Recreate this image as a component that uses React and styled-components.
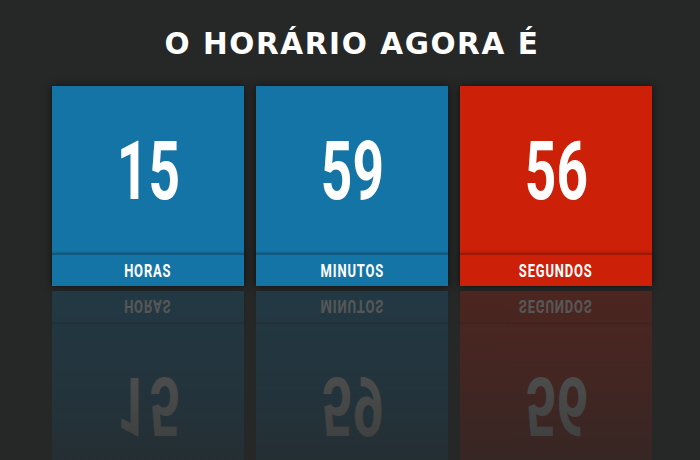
import React from "react";
import styled, { createGlobalStyle } from "styled-components";

const Global = createGlobalStyle`
  html, body {
    margin: 0;
    padding: 0;
    background: #262727;
    overflow: hidden;
  }
`;

const Page = styled.div`
  width: 700px;
  height: 460px;
  padding: 24px 0 0 4px;
  box-sizing: border-box;
  display: flex;
  flex-direction: column;
  align-items: center;
`;

const Title = styled.h1`
  margin: 0 0 22px;
  font-family: "DejaVu Sans", "Open Sans", sans-serif;
  font-weight: 700;
  font-size: 29.5px;
  line-height: 40px;
  color: #ffffff;
  letter-spacing: 1.6px;
`;

const Row = styled.div`
  display: flex;
  gap: 12px;
`;

const Column = styled.div`
  display: flex;
  flex-direction: column;
  gap: 5px;
  width: 192px;
`;

const Face = styled.div`
  height: 200px;
  display: flex;
  flex-direction: column;
  background: ${(p) => p.$color};
  box-shadow: ${(p) => (p.$flat ? "none" : "0 0 8px rgba(0, 0, 0, 0.55)")};
`;

const NumberArea = styled.div`
  flex: 1;
  display: flex;
  align-items: center;
  justify-content: center;
`;

const Digits = styled.span`
  display: inline-block;
  font-family: Roboto, "Liberation Sans", sans-serif;
  font-weight: 700;
  font-size: 81px;
  line-height: 1;
  color: #ffffff;
  transform: scaleX(0.68);
  padding-top: 3px;
`;

const Label = styled.div`
  height: 31px;
  display: flex;
  align-items: center;
  justify-content: center;
  border-top: 2px solid rgba(0, 0, 0, 0.22);
  box-shadow: 0 -1px 2px rgba(0, 0, 0, 0.15);
`;

const LabelText = styled.span`
  display: inline-block;
  font-family: Roboto, "Liberation Sans", sans-serif;
  font-weight: 700;
  font-size: 18.5px;
  letter-spacing: 1.2px;
  color: #ffffff;
  transform: scaleX(0.7);
`;

const Reflection = styled.div`
  position: relative;
  height: 200px;
  &::after {
    content: "";
    position: absolute;
    inset: 0;
    background: linear-gradient(
      to bottom,
      rgba(38, 39, 39, 0.77) 0%,
      rgba(38, 39, 39, 0.84) 50%,
      rgba(38, 39, 39, 0.93) 100%
    );
  }
`;

const Flipped = styled.div`
  transform: scaleY(-1);
`;

const units = [
  { value: "15", label: "HORAS", color: "#1574a6" },
  { value: "59", label: "MINUTOS", color: "#1574a6" },
  { value: "56", label: "SEGUNDOS", color: "#cc2008" },
];

function Card({ value, label, color, flat }) {
  return (
    <Face $color={color} $flat={flat}>
      <NumberArea>
        <Digits>{value}</Digits>
      </NumberArea>
      <Label>
        <LabelText>{label}</LabelText>
      </Label>
    </Face>
  );
}

export default function App() {
  return (
    <>
      <Global />
      <Page>
        <Title>O HORÁRIO AGORA É</Title>
        <Row>
          {units.map((u) => (
            <Column key={u.label}>
              <Card {...u} />
              <Reflection aria-hidden="true">
                <Flipped>
                  <Card {...u} flat />
                </Flipped>
              </Reflection>
            </Column>
          ))}
        </Row>
      </Page>
    </>
  );
}
